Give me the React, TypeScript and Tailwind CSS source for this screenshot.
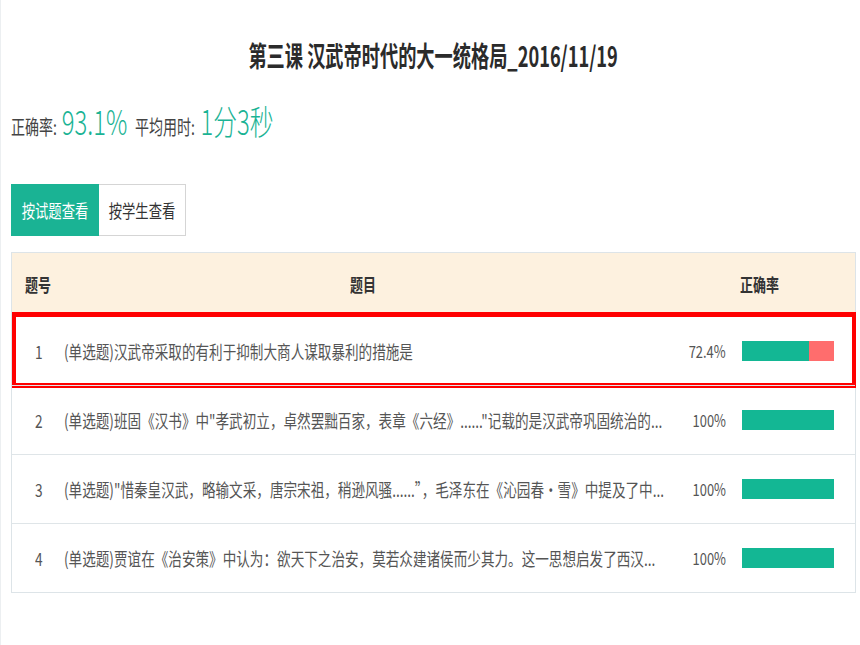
import React from "react";

type Row = { no: number; text: string; rate: number; label: string };

const rows: Row[] = [
  { no: 1, text: "(单选题)汉武帝采取的有利于抑制大商人谋取暴利的措施是", rate: 72.4, label: "72.4%" },
  {
    no: 2,
    text: "(单选题)班固《汉书》中\"孝武初立，卓然罢黜百家，表章《六经》......\"记载的是汉武帝巩固统治的...",
    rate: 100,
    label: "100%",
  },
  {
    no: 3,
    text: "(单选题)\"惜秦皇汉武，略输文采，唐宗宋祖，稍逊风骚......”，毛泽东在《沁园春·雪》中提及了中...",
    rate: 100,
    label: "100%",
  },
  {
    no: 4,
    text: "(单选题)贾谊在《治安策》中认为：欲天下之治安，莫若众建诸侯而少其力。这一思想启发了西汉...",
    rate: 100,
    label: "100%",
  },
];

function Bar({ rate }: { rate: number }) {
  return (
    <div className="flex h-[20px] w-[92px] bg-[#ff6d6d]">
      <div className="h-full bg-[#13b794]" style={{ width: `${rate}%` }} />
    </div>
  );
}

export default function App() {
  return (
    <div
      className="min-h-[645px] w-[860px] border-l border-[#eceff1] bg-white pl-[10px] pr-[4px] pt-[37px] text-[#555]"
      style={{ fontFamily: '"Noto Sans CJK SC", "Liberation Sans", sans-serif' }}
    >
      {/* title */}
      <div className="flex h-9 items-center justify-center">
        <span className="inline-block origin-center scale-x-[0.65] whitespace-nowrap text-[28px] font-bold leading-9 text-[#2b2b2b]">
          第三课 汉武帝时代的大一统格局_2016/11/19
        </span>
      </div>

      {/* summary */}
      <div className="mt-[31px] h-[34px]">
        <span className="inline-flex origin-left scale-x-[0.7] items-baseline whitespace-nowrap leading-none">
          <span className="text-[20px] text-[#444]">正确率:</span>
          <span className="ml-[7px] text-[34px] font-light text-[#1ab394]">93.1%</span>
          <span className="ml-[11px] text-[20px] text-[#444]">平均用时:</span>
          <span className="ml-[8px] text-[34px] font-light text-[#1ab394]">1分3秒</span>
        </span>
      </div>

      {/* tabs */}
      <div className="mt-[46px] flex h-[52px]">
        <div className="flex w-[88px] items-center justify-center bg-[#1ab394] text-white">
          <span className="inline-block origin-center scale-x-[0.74] whitespace-nowrap text-[18px]">按试题查看</span>
        </div>
        <div className="flex w-[87px] items-center justify-center border border-l-0 border-[#d5d5d5] bg-white text-[#333]">
          <span className="inline-block origin-center scale-x-[0.74] whitespace-nowrap text-[18px]">按学生查看</span>
        </div>
      </div>

      {/* table */}
      <div className="mt-[16px] border border-[#dde4e8]">
        <div className="flex h-[63px] items-center bg-[#fdf1df] font-bold text-[#333]">
          <div className="w-[52px] pl-[13px]">
            <span className="inline-block origin-left scale-x-[0.72] whitespace-nowrap text-[18px]">题号</span>
          </div>
          <div className="flex w-[598px] justify-center">
            <span className="inline-block origin-center scale-x-[0.72] whitespace-nowrap text-[18px]">题目</span>
          </div>
          <div className="w-[64px]" />
          <div className="pl-[14px]">
            <span className="inline-block origin-left scale-x-[0.72] whitespace-nowrap text-[18px]">正确率</span>
          </div>
        </div>

        {rows.map((r) => (
          <div key={r.no} className="relative flex h-[69px] items-center border-t border-[#dfe5e8]">
            <div className="w-[52px] pl-[23px]">
              <span className="inline-block origin-left scale-x-[0.76] whitespace-nowrap text-[18px]">{r.no}</span>
            </div>
            <div className="w-[598px]">
              <span className="inline-block origin-left scale-x-[0.755] whitespace-nowrap text-[18px]">{r.text}</span>
            </div>
            <div className="flex w-[64px] justify-end">
              <span className="inline-block origin-right scale-x-[0.76] whitespace-nowrap text-[17px]">{r.label}</span>
            </div>
            <div className="pl-[16px]">
              <Bar rate={r.rate} />
            </div>
            {r.no === 1 && (
              <div className="pointer-events-none absolute -bottom-[3px] -right-[1px] -top-[5px] left-0 border-x-[4px] border-y-[5px] border-[#ff0000]" />
            )}
          </div>
        ))}
      </div>
    </div>
  );
}
